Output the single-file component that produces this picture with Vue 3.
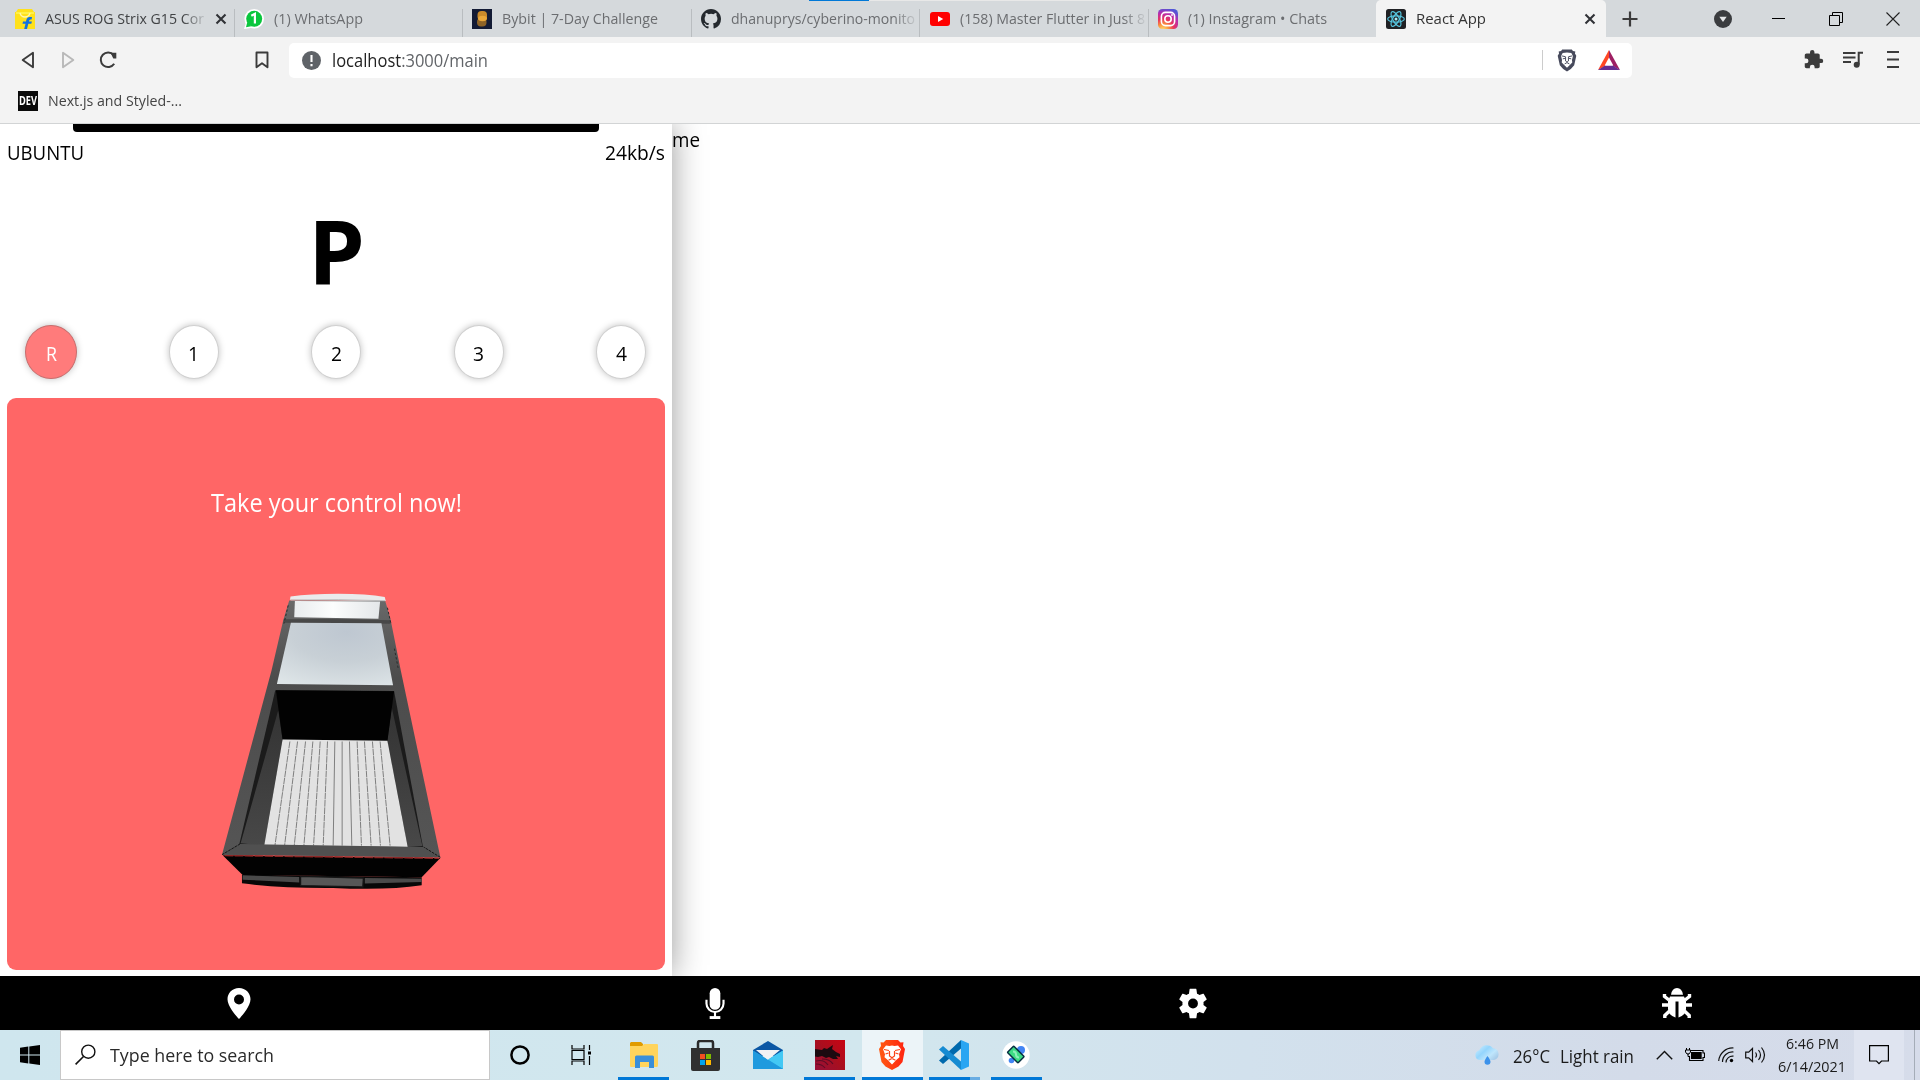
<script setup>
const tabs = [
  { id: 'flipkart', title: 'ASUS ROG Strix G15 Cor', width: 159, close: true, dark: true },
  { id: 'whatsapp', title: '(1) WhatsApp', width: 89 },
  { id: 'bybit', title: 'Bybit | 7-Day Challenge', width: 156 },
  { id: 'github', title: 'dhanuprys/cyberino-monito', width: 184, clipped: true },
  { id: 'youtube', title: '(158) Master Flutter in Just 8', width: 185, clipped: true },
  { id: 'instagram', title: '(1) Instagram • Chats', width: 139 },
  { id: 'react', title: 'React App', width: 70, close: true, active: true },
]
const gears = [
  { label: 'R', width: 11 },
  { label: '1', width: 11 },
  { label: '2', width: 11 },
  { label: '3', width: 11 },
  { label: '4', width: 11 },
]
const planks = [
  [270, 225], [293, 254], [317, 283], [339, 312], [361, 341], [383, 370], [405, 400],
  [427, 427], [449, 456], [472, 485], [494, 514], [518, 542], [541, 571],
]

// Squeezes a text run to a known advance width.
const vFit = (el, { value }) => {
  el.style.transform = ''
  el.style.width = 'max-content'
  const natural = el.getBoundingClientRect().width
  el.style.width = `${value}px`
  el.style.transform = `scaleX(${value / natural})`
}
</script>

<template>
  <div class="screen">
    <header class="tabstrip">
      <div class="progress"><span></span></div>
      <div
        v-for="t in tabs"
        :key="t.id"
        class="tab"
        :class="{ active: t.active, dark: t.dark }"
      >
        <svg class="fav" viewBox="0 0 20 20">
          <g v-if="t.id === 'flipkart'">
            <path d="M0 3h1l2-3h14l2 3h1v17H0z" fill="#ffe11b" />
            <path d="M1 3h18v2H1z" fill="#fff04a" />
            <path d="M5 4q1 4 5 4t5-4" fill="none" stroke="#fff7b0" stroke-width="1.3" />
            <path d="M17 8h-2.500q-2.500 0-3.200 3l-.3 1.500H8l-.5 2.200h3l-1.300 5.300h2.800l1.300-5.300h3l.6-2.200h-3q.3-2 1.600-2h1.100z" fill="#1372e0" />
          </g>
          <g v-else-if="t.id === 'whatsapp'">
            <circle cx="10.200" cy="9.800" r="9.800" fill="#fff" />
            <path d="M0 20l1.800-6 5 5z" fill="#fff" />
            <circle cx="10.200" cy="9.800" r="8" fill="#0ac63e" />
            <path d="M2 18.200l1.300-5 4 4z" fill="#0ac63e" />
            <path d="M7.300 6.800l3.600-2v9.700" fill="none" stroke="#fff" stroke-width="2.200" />
          </g>
          <g v-else-if="t.id === 'bybit'">
            <path d="M0 0h20v20H0z" fill="#131b35" />
            <rect x="5.500" y="2" width="9.500" height="9.500" rx="4" fill="#c98a2b" />
            <rect x="5" y="9" width="9.500" height="8.500" rx="4" fill="#8f6427" />
            <ellipse cx="10.500" cy="9.500" rx="4.500" ry="2.800" fill="#e8a63a" />
          </g>
          <path
            v-else-if="t.id === 'github'"
            transform="scale(1.25)"
            fill="#24292e"
            d="M8 0C3.580 0 0 3.580 0 8c0 3.540 2.290 6.530 5.470 7.590.4.070.55-.17.55-.38v-1.490c-2.010.37-2.530-.49-2.690-.94-.09-.23-.48-.94-.82-1.130-.28-.15-.68-.52-.01-.53.63-.01 1.080.58 1.230.82.72 1.210 1.870.87 2.330.66.070-.52.28-.87.51-1.070-1.780-.2-3.640-.89-3.640-3.950 0-.87.31-1.590.82-2.150-.08-.2-.36-1.020.08-2.120 0 0 .67-.21 2.200.82a7.600 7.600 0 0 1 4 0c1.530-1.040 2.200-.82 2.200-.82.44 1.100.16 1.920.08 2.120.51.56.82 1.270.82 2.150 0 3.070-1.870 3.750-3.650 3.950.29.25.54.73.54 1.480v2.200c0 .21.15.46.55.38A8 8 0 0 0 16 8c0-4.420-3.580-8-8-8z"
          />
          <g v-else-if="t.id === 'youtube'">
            <rect y="3" width="20" height="14" rx="3" fill="#f00" />
            <path d="M8 7l5.200 3L8 13z" fill="#fff" />
          </g>
          <g v-else-if="t.id === 'instagram'">
            <defs>
              <radialGradient id="ig" cx=".25" cy="1.050" r="1.100">
                <stop offset="0" stop-color="#ffe07a" />
                <stop offset=".25" stop-color="#fb9a3c" />
                <stop offset=".5" stop-color="#e9345f" />
                <stop offset=".78" stop-color="#b52db0" />
                <stop offset="1" stop-color="#5157d6" />
              </radialGradient>
            </defs>
            <rect width="20" height="20" rx="4.500" fill="url(#ig)" />
            <rect x="3.400" y="3.400" width="13.200" height="13.200" rx="4" fill="none" stroke="#fff" stroke-width="1.600" />
            <circle cx="10" cy="10" r="3.200" fill="none" stroke="#fff" stroke-width="1.600" />
            <circle cx="14" cy="6" r=".9" fill="#fff" />
          </g>
          <g v-else fill="none" stroke="#56c5de" stroke-width="1.200">
            <rect width="20" height="20" rx="2.500" fill="#202124" stroke="none" />
            <ellipse cx="10" cy="10" rx="8.300" ry="3.200" />
            <ellipse cx="10" cy="10" rx="8.300" ry="3.200" transform="rotate(60 10 10)" />
            <ellipse cx="10" cy="10" rx="8.300" ry="3.200" transform="rotate(120 10 10)" />
            <circle cx="10" cy="10" r="1.500" fill="#a5ecf7" stroke="none" />
          </g>
        </svg>
        <div class="title" :class="{ fade: t.clipped || t.dark }">
          <span v-fit="t.width" class="fit">{{ t.title }}</span>
        </div>
        <svg v-if="t.close" class="close" viewBox="0 0 12 12">
          <path d="M1.500 1.500l9 9m0-9l-9 9" stroke="#303236" stroke-width="2.100" />
        </svg>
      </div>
      <svg class="plus" viewBox="0 0 16 16"><path d="M8 .5v15M.5 8h15" stroke="#3b3b3b" stroke-width="2.200" /></svg>
      <svg class="tabsearch" viewBox="0 0 18 18">
        <circle cx="9" cy="9" r="9" fill="#3a3c3f" />
        <path d="M5.300 6.700h7.400L9 12z" fill="#e4e6e8" />
      </svg>
      <div class="wincontrols">
        <svg width="14" height="14" viewBox="0 0 14 14"><path d="M0 6.500h13" stroke="#000" /></svg>
        <svg width="14" height="14" viewBox="0 0 14 14" fill="none" stroke="#000">
          <path d="M.5 3.500h10v10H.5zM3.500 3V.500h10v10H11" />
        </svg>
        <svg width="14" height="14" viewBox="0 0 14 14"><path d="M.5.500l13 13m0-13l-13 13" stroke="#222" stroke-width="1.100" /></svg>
      </div>
    </header>

    <div class="toolbar">
      <div class="navbtns">
        <svg width="14" height="18" viewBox="0 0 14 18"><path d="M12 1.800v14.400L1.700 9z" fill="none" stroke="#3b3b3b" stroke-width="1.900" stroke-linejoin="round" /></svg>
        <svg width="14" height="18" viewBox="0 0 14 18"><path d="M2 1.800v14.400L12.300 9z" fill="none" stroke="#b8b8b8" stroke-width="1.900" stroke-linejoin="round" /></svg>
        <svg class="reload" width="19" height="18" viewBox="0 0 19 18">
          <path d="M15.200 12.800A7.300 7.300 0 1 1 14.600 4" fill="none" stroke="#3b3b3b" stroke-width="2" />
          <path d="M11.500 1.800h5.800v5.800h-3z" fill="#3b3b3b" />
        </svg>
      </div>
      <svg class="mark" width="14" height="18" viewBox="0 0 14 18"><path d="M1.500 1.500h11v14.800L7 12.300l-5.500 4z" fill="none" stroke="#3b3b3b" stroke-width="1.900" stroke-linejoin="round" /></svg>
      <div class="address">
        <svg class="info" viewBox="0 0 19 19">
          <circle cx="9.500" cy="9.500" r="9.500" fill="#5f6368" />
          <path d="M9.500 4v7M9.500 13v2.300" stroke="#fff" stroke-width="2.100" />
        </svg>
        <span v-fit="156" class="fit url">localhost<i>:3000/main</i></span>
        <span class="bar"></span>
        <svg class="shield" viewBox="0 0 20 24">
          <path d="M5 .5h10l1.200 1.600 2.500.5-.4 2 1.400 2.400L17.500 17 14 20.800 10 23.500 6 20.800 2.500 17 .3 7l1.400-2.400-.4-2 2.500-.5z" fill="#474a5c" />
          <path d="M5.500 4.300l4.500-.6 4.500.6 1.700 3-1 4.200.3 2.500-2.300 2.400L10 19.600l-3.200-3.200L4.500 14l.3-2.500-1-4.200z" fill="#fff" />
          <path d="M4.500 7.200l3.800.8m7.200-.8l-3.800.8M5.600 10.300l2.700-.7m6.100.7l-2.700-.7M8.500 8v4.500L10 13.700l1.500-1.200V8M7.500 15.600l2.500-1.400 2.500 1.400" fill="none" stroke="#474a5c" stroke-width="1" />
        </svg>
        <svg class="bat" viewBox="0 0 22 20">
          <path d="M11 0L0 20l7-4 4-7z" fill="#ff4724" />
          <path d="M11 0l11 20-7-4-4-7z" fill="#9e1f63" />
          <path d="M0 20l7-4.500h8L22 20z" fill="#662d91" />
          <path d="M11 7.500l4.300 8H6.700z" fill="#fff" />
        </svg>
      </div>
      <div class="tools">
        <svg width="22" height="22" viewBox="1 1 22 22"><path fill="#3b3b3b" d="M20.500 11H19V7c0-1.100-.9-2-2-2h-4V3.500a2.500 2.500 0 0 0-5 0V5H4c-1.100 0-2 .9-2 2v3.800h1.500a2.700 2.700 0 0 1 0 5.400H2V20c0 1.100.9 2 2 2h3.800v-1.500a2.700 2.700 0 0 1 5.400 0V22H17c1.100 0 2-.9 2-2v-4h1.500a2.500 2.500 0 0 0 0-5z" transform="translate(2 1) scale(.88)" /></svg>
        <svg width="20" height="18" viewBox="0 0 20 18">
          <path d="M0 2h12.500M0 6.500h12.500M0 11h8" stroke="#3b3b3b" stroke-width="1.900" />
          <path d="M15.700 13.500V1.800H20" fill="none" stroke="#3b3b3b" stroke-width="2" />
          <circle cx="13.700" cy="13.800" r="3" fill="#3b3b3b" />
        </svg>
        <svg width="12" height="18" viewBox="0 0 12 18"><path d="M0 1h12M0 8.500h12M0 16h12" stroke="#3b3b3b" stroke-width="1.900" /></svg>
      </div>
    </div>

    <div class="bookmarks">
      <span class="dev"><b v-fit="18" class="fit">DEV</b></span>
      <span v-fit="134" class="fit link">Next.js and Styled-...</span>
    </div>

    <main class="page">
      <section class="phone">
        <div class="notch"></div>
        <div class="status">
          <span v-fit="77" class="fit">UBUNTU</span>
          <span v-fit="60" class="fit">24kb/s</span>
        </div>
        <div class="mode"><span v-fit="57" class="fit">P</span></div>
        <div class="gears">
          <div v-for="(g, i) in gears" :key="g.label" class="gear" :class="{ on: i === 0 }">
            <span v-fit="g.width" class="fit">{{ g.label }}</span>
          </div>
        </div>
        <div class="card">
          <span v-fit="251" class="fit">Take your control now!</span>
          <svg class="truck" viewBox="60 365 670 895">
            <defs>
              <linearGradient id="body" x1="0" y1="0" x2="0" y2="1"><stop offset="0" stop-color="#696969" /><stop offset=".3" stop-color="#4c4c4c" /><stop offset="1" stop-color="#555" /></linearGradient>
              <linearGradient id="hood" x1="0" y1="0" x2="1" y2="0"><stop offset="0" stop-color="#e9ecee" /><stop offset=".45" stop-color="#fcfdfd" /><stop offset="1" stop-color="#e4e7e9" /></linearGradient>
              <radialGradient id="glass" cx=".6" cy=".15" r=".95"><stop offset="0" stop-color="#bec7d1" /><stop offset=".5" stop-color="#c8d0d6" /><stop offset="1" stop-color="#dde4e7" /></radialGradient>
              <linearGradient id="wall" x1="0" y1="0" x2="0" y2="1"><stop offset="0" stop-color="#333" /><stop offset="1" stop-color="#484848" /></linearGradient>
            </defs>
            <path d="M268 390L556 390 572 445 603 600 722 1162 66 1154 215 600 250 450z" fill="url(#body)" />
            <path d="M270 388L272 378Q330 370 415 370T555 380L558 392z" fill="#eaebec" />
            <path d="M272 389Q420 386 556 391" fill="none" stroke="#bbb" stroke-width="3" />
            <path d="M285 392L541 393 536 445 283 441z" fill="url(#hood)" />
            <path d="M252 447Q400 444 572 450V460L250 457z" fill="#484848" />
            <path d="M273 457L545 459 580 645 231 641z" fill="url(#glass)" />
            <path d="M563 412L574 462M584 535L596 598M265 405L252 460" stroke="#2c2c2c" stroke-width="3" stroke-dasharray="7 6" fill="none" />
            <path d="M226 660L583 662 670 1132 118 1123z" fill="#1b1b1b" />
            <path d="M235 720L248 808 193 1126 122 1120zM576 712L563 812 624 1131 668 1128z" fill="url(#wall)" />
            <path d="M228 660L583 663 563 812 248 808z" fill="#020202" />
            <path d="M248 808L563 812 624 1131 193 1126z" fill="#e2e2e2" />
            <path
              v-for="([top, bottom], i) in planks"
              :key="i"
              :d="`M${top} 814L${bottom} 1127`"
              stroke="#7e7e7e"
              stroke-width="3"
              :stroke-dasharray="i > 5 && i < 9 ? 'none' : '20 2'"
            />
            <path d="M118 1122L672 1131 722 1162 66 1154z" fill="#505050" />
            <path d="M66 1154l54-32M722 1162l-50-31" stroke="#161616" stroke-width="3" stroke-dasharray="8 3" />
            <path d="M68 1156L722 1164 666 1222 128 1215z" fill="#020202" />
            <path d="M74 1157L718 1165" stroke="#8f2524" stroke-width="4" stroke-dasharray="26 4" />
            <path d="M126 1214L666 1222V1246Q560 1262 400 1254 240 1255 126 1240z" fill="#080808" />
            <path d="M128 1216L298 1221V1238L128 1229zM495 1224L666 1226V1236L495 1241z" fill="#4a4a4a" />
            <path d="M302 1219L491 1224 489 1251 302 1247z" fill="#575757" stroke="#161616" stroke-width="4" />
          </svg>
        </div>
      </section>
      <section class="content"><span v-fit="28" class="fit">me</span></section>
    </main>

    <nav class="dock">
      <svg width="24" height="31" viewBox="0 0 24 31"><path fill="#fff" fill-rule="evenodd" d="M12 0C5.300 0 .5 5 .5 11.300.5 19.500 12 31 12 31s11.500-11.500 11.500-19.700C23.500 5 18.700 0 12 0zm0 6.500a5 5 0 1 1 0 10 5 5 0 0 1 0-10z" /></svg>
      <svg width="20" height="31" viewBox="0 0 20 32">
        <rect x="4.500" y="0" width="11" height="22.500" rx="5.500" fill="#fff" />
        <path d="M1.200 12v4a8.800 8.800 0 0 0 17.600 0v-4M10 25v5" fill="none" stroke="#fff" stroke-width="2.200" />
        <path d="M4.500 29h11v3h-11z" fill="#fff" />
      </svg>
      <svg width="30" height="31" viewBox="1.500 1 21 22"><path fill="#fff" d="M19.430 12.980c.04-.32.070-.64.070-.98s-.03-.66-.07-.98l2.110-1.650c.19-.15.24-.42.12-.64l-2-3.460c-.12-.22-.39-.3-.61-.22l-2.490 1c-.52-.4-1.080-.73-1.690-.98l-.38-2.650C14.460 1.700 14.250 1.500 14 1.500h-4c-.25 0-.46.2-.49.920l-.38 2.650c-.61.25-1.170.59-1.690.98l-2.490-1c-.23-.09-.49 0-.61.22l-2 3.460c-.13.22-.07.49.12.640l2.110 1.650c-.04.32-.07.65-.07.98s.03.66.070.98l-2.110 1.650c-.19.15-.24.42-.12.640l2 3.460c.12.22.39.300.61.220l2.490-1c.52.400 1.080.730 1.690.980l.38 2.650c.03.720.24.920.49.920h4c.25 0 .46-.2.490-.92l.38-2.650c.61-.25 1.170-.59 1.690-.98l2.490 1c.23.090.49 0 .61-.22l2-3.460c.12-.22.070-.49-.12-.64l-2.110-1.650zM12 15.500a3.500 3.500 0 1 1 0-7 3.500 3.500 0 0 1 0 7z" /></svg>
      <svg width="30" height="31" viewBox="0 0 30 31">
        <path d="M9 6.800Q10 0 15 0t6 6.800z" fill="#fff" />
        <path d="M2.500 6v2.500L7 12M27.500 6v2.500L23 12M0 17h7m23 0h-7M2.800 30v-2.500L7.500 23m19.700 7v-2.500L22.500 23" fill="none" stroke="#fff" stroke-width="3.400" />
        <path d="M8 8.500h14l2 4.500v8q0 6-7.500 8.500V13.500h-3v16Q6 27 6 21v-8z" fill="#fff" />
      </svg>
    </nav>

    <footer class="taskbar">
      <div class="start">
        <svg width="20" height="20" viewBox="0 0 20 20"><path d="M0 2.800l8.300-1.200v7.900H0zM9.300 1.400L20 0v9.500H9.300zM0 10.500h8.300v7.900L0 17.200zM9.300 10.500H20V20L9.300 18.600z" /></svg>
      </div>
      <div class="search">
        <svg width="21" height="21" viewBox="0 0 21 21"><circle cx="13.300" cy="7.700" r="6.600" fill="none" stroke="#111" stroke-width="1.400" /><path d="M8.500 12.500L.6 20.400" stroke="#111" stroke-width="1.600" /></svg>
        <span v-fit="164" class="fit">Type here to search</span>
      </div>
      <div class="apps">
        <div class="app">
          <svg width="20" height="20" viewBox="0 0 20 20"><circle cx="10" cy="10" r="8.600" fill="none" stroke="#000" stroke-width="2.500" /></svg>
        </div>
        <div class="app">
          <svg width="22" height="20" viewBox="0 0 22 20" fill="none" stroke="#000" stroke-width="1.200">
            <path d="M1 0v4h12V0M1 5.500h12v9H1zM1 20v-4h12v4M18.500 0v5M18.500 11v9" />
            <path d="M17 6.500h3v3h-3z" fill="#000" stroke="none" />
          </svg>
        </div>
        <div class="app running">
          <svg width="28" height="26" viewBox="0 0 28 26">
            <path d="M1 0h10l2 2v3H0V1z" fill="#e09b00" />
            <path d="M0 4h12l2-2h13q1 0 1 1v20q0 2-1 2H1q-1 0-1-1z" fill="#ffd45c" />
            <path d="M5 26V15q0-1.500 1.500-1.500h16q1.500 0 1.500 1.500v11h-5v-6h-9v6z" fill="#3a8fd9" />
          </svg>
        </div>
        <div class="app">
          <svg width="29" height="31" viewBox="0 0 29 31">
            <path d="M7 9V3q0-2 2-2h11q2 0 2 2v6" fill="none" stroke="#2b2b2b" stroke-width="2.500" />
            <path d="M0 8h29v21q0 2-2 2H2q-2 0-2-2z" fill="#303030" />
            <path d="M9 14h5v5H9z" fill="#f25022" /><path d="M15 14h5v5h-5z" fill="#7fba00" />
            <path d="M9 20h5v5H9z" fill="#00a4ef" /><path d="M15 20h5v5h-5z" fill="#ffb900" />
          </svg>
        </div>
        <div class="app">
          <svg width="30" height="28" viewBox="0 0 30 28">
            <path d="M0 9L15 0l15 9v6H0z" fill="#0b57a4" />
            <path d="M0 9.500L15 18.500 30 9.500V28H0z" fill="#26a3e0" />
            <path d="M3 9h24L15 19z" fill="#f2f2f4" />
            <path d="M30 9.500V28L15 18.500z" fill="#43c8f4" />
            <path d="M0 28V10L30 28z" fill="#1f9ade" />
          </svg>
        </div>
        <div class="app running">
          <svg width="30" height="30" viewBox="0 0 30 30">
            <defs><linearGradient id="red" x1="0" y1="1" x2="1" y2="0"><stop offset="0" stop-color="#95103a" /><stop offset=".5" stop-color="#a80f1f" /><stop offset="1" stop-color="#c90412" /></linearGradient></defs>
            <path d="M0 0h30v30H0z" fill="url(#red)" />
            <path d="M0 9l7 1 2-2 3 1 3-2 3-2-1 4 4 3 4 2v3l-4-1 2 3-5 0-4-2-3 1-4-2-4 1-5-1z" fill="#1c0a10" />
            <path d="M1 21q8-2 12 4m-12-1q6 0 9 4M7 19q8 0 11 5" fill="none" stroke="#5d0c26" stroke-width="1.200" />
          </svg>
        </div>
        <div class="app running current">
          <svg width="26" height="30" viewBox="0 0 26 30">
            <defs><linearGradient id="lion"><stop offset="0" stop-color="#ff5a13" /><stop offset="1" stop-color="#ff2410" /></linearGradient></defs>
            <path d="M7 0h12l2.500 2.500 3-.2L24 6l2 3-2.500 13-4 4.500L13 30l-6.500-3.500-4-4.500L0 9l2-3-.5-3.700 3 .2z" fill="url(#lion)" />
            <path d="M7 5.500l3.500.5 2.500-.4 2.500.4 3.500-.5 3 3.800-2 5 .5 3-3 2.500L13 24.500l-4.500-4.700-3-2.500.5-3-2-5z" fill="#fff" />
            <path d="M5 9.500l5 1M21 9.500l-5 1M6.500 14l3-1m10 1l-3-1M10.500 11v5l2.500 1.800 2.500-1.800v-5M9.500 20.300L13 18.500l3.500 1.800" fill="none" stroke="#fb4316" stroke-width="1.200" />
          </svg>
        </div>
        <div class="app running grouped">
          <svg width="30" height="30" viewBox="0 0 30 30">
            <path d="M22 0v8.500L4 24 0 20.500z" fill="#0069ad" />
            <path d="M22 30v-8.500L4 6 0 9.500z" fill="#168bd2" />
            <path d="M22 0l8 3.500v23L22 30z" fill="#2aa5f2" />
          </svg>
        </div>
        <div class="app running">
          <svg width="28" height="28" viewBox="0 0 28 28">
            <circle cx="14" cy="14" r="13.700" fill="#fff" />
            <circle cx="19" cy="9" r="4" fill="#4285f4" /><circle cx="9.500" cy="19.500" r="2.800" fill="#4285f4" />
            <rect x="9.300" y="6" width="9" height="15" rx="1" transform="rotate(-45 13.800 13.500)" fill="#3ddc84" stroke="#073042" stroke-width="1.500" />
            <path d="M11 10.500q3 0 3 3t3 3" fill="none" stroke="#8cf0ba" stroke-width="2" />
          </svg>
        </div>
      </div>
      <div class="tray">
        <svg class="weather" width="26" height="20" viewBox="0 0 26 20">
          <defs><linearGradient id="cloud" x1="0" y1="0" x2="1" y2=".7"><stop offset="0" stop-color="#d8f2ff" /><stop offset=".45" stop-color="#93d5fd" /><stop offset=".75" stop-color="#bfe6fc" /><stop offset="1" stop-color="#a9cdea" /></linearGradient></defs>
          <path d="M5.500 15a5 5 0 0 1-.2-9.800A8 8 0 0 1 19 3.200 6 6 0 0 1 20 15z" fill="url(#cloud)" />
          <path d="M13.500 11q-3 4-3 5.800a3 3 0 0 0 6 0q0-1.800-3-5.800z" fill="#3d92ea" />
        </svg>
        <span v-fit="37" class="fit temp">26°C</span>
        <span v-fit="74" class="fit rain">Light rain</span>
        <svg class="up" width="17" height="10" viewBox="0 0 17 10"><path d="M.8 9.200l7.700-7.700 7.700 7.700" fill="none" stroke="#111" stroke-width="1.400" /></svg>
        <svg class="battery" width="20" height="14" viewBox="0 0 20 14">
          <path d="M6 2.500H18v2.500h1.500v4.500H18v3H4.500V8" fill="none" stroke="#000" stroke-width="1.100" />
          <path d="M6 4h10.700v7H6z" />
          <path d="M1.500 0v2m3-2v2M3 5.500v3h1.500M.5 2h5v2l-1.500 2H2L.5 4z" fill="none" stroke="#000" />
        </svg>
        <svg class="wifi" width="16" height="16" viewBox="0 0 16 16">
          <path d="M.7 14A14 14 0 0 1 15.500 1M4.500 15A10 10 0 0 1 15.500 5M8 15.500a6.500 6.500 0 0 1 7.500-6.300" fill="none" stroke="#111" stroke-width="1.200" />
          <circle cx="13.500" cy="13.500" r="1.700" />
        </svg>
        <svg class="sound" width="21" height="18" viewBox="0 0 21 18" fill="none" stroke="#111" stroke-width="1.200">
          <path d="M.7 6.200h3L7.500 2.500v13L3.700 11.800h-3zM10.500 6.500q2 2.500 0 5M13.500 4q4 5 0 10M16.500 1.500q6 7.500 0 15" />
        </svg>
        <div class="clock">
          <span v-fit="53" class="fit">6:46 PM</span>
          <span v-fit="68" class="fit">6/14/2021</span>
        </div>
        <div class="notify">
          <svg width="20" height="20" viewBox="0 0 20 20"><path d="M.6.700h18.800v15.300h-6.900L10 18.700 7.500 16H.6z" fill="none" stroke="#000" stroke-width="1.200" /></svg>
        </div>
        <span class="desktop"></span>
      </div>
    </footer>
  </div>
</template>

<style>
body {
  margin: 0;
  overflow: hidden;
}
</style>

<style scoped>
.screen {
  display: flex;
  flex-direction: column;
  width: 1920px;
  height: 1080px;
  overflow: hidden;
  background: #fff;
  font-family: 'Open Sans', 'Noto Sans', sans-serif;
  color: #000;
}
.screen * {
  box-sizing: border-box;
}
svg {
  display: block;
  flex: none;
}
.fit {
  display: inline-block;
  flex: none;
  white-space: nowrap;
  transform-origin: 0 50%;
}

.tabstrip {
  position: relative;
  display: flex;
  align-items: center;
  height: 37px;
  flex: none;
  padding-left: 6px;
  background: #d5d9dc;
  font-size: 15px;
}
.progress {
  position: absolute;
  top: 0;
  left: 809px;
  width: 301px;
  height: 1px;
  background: #e8e8e8;
}
.progress span {
  display: block;
  width: 60px;
  height: 1px;
  background: #0078d7;
}
.tab {
  display: flex;
  align-items: center;
  gap: 10px;
  width: 228.600px;
  height: 37px;
  flex: none;
  padding: 1px 4px 0 9.300px;
  color: #6b6d70;
  background: linear-gradient(#b9bdc0, #b9bdc0) no-repeat right 0 top 9px / 1px 28px;
}
.tab:nth-child(7) {
  background: none;
}
.tab.dark {
  padding-right: 8px;
  color: #414345;
}
.tab.active {
  width: 230px;
  margin-left: -2px;
  padding-right: 10px;
  padding-left: 10px;
  color: #333;
  background: #f3f3f3;
  border-radius: 5px 5px 0 0;
}
.fav {
  width: 20px;
  height: 20px;
}
.title {
  flex: 1;
  padding-bottom: 2px;
  line-height: 22px;
  overflow: hidden;
}
.title.fade {
  mask-image: linear-gradient(90deg, #000 calc(100% - 22px), rgba(0, 0, 0, 0.12) 100%);
}
.close {
  width: 12px;
  height: 12px;
}
.plus {
  width: 16px;
  height: 16px;
  margin-left: 16px;
}
.tabsearch {
  width: 18px;
  height: 18px;
  margin-left: 76px;
}
.wincontrols {
  display: flex;
  gap: 43px;
  margin-left: 40px;
}

.toolbar {
  display: flex;
  align-items: center;
  height: 46px;
  flex: none;
  background: #f3f3f3;
}
.navbtns {
  display: flex;
  gap: 26px;
  margin-left: 21px;
}
.reload {
  margin-left: -2px;
}
.mark {
  margin-left: 137px;
}
.address {
  display: flex;
  align-items: center;
  width: 1343px;
  height: 35px;
  margin-left: 20px;
  padding-left: 13px;
  border-radius: 5px;
  background: #fff;
  font-size: 17.500px;
  color: #222;
}
.info {
  width: 19px;
  height: 19px;
  margin-right: 11px;
}
.url {
  padding-bottom: 1px;
}
.url i {
  font-style: normal;
  color: #626569;
}
.bar {
  width: 1px;
  height: 20px;
  margin-left: 1054px;
  background: #ccc;
}
.shield {
  width: 20px;
  height: 23px;
  margin-left: 14px;
}
.bat {
  width: 22px;
  height: 20px;
  margin-left: 21px;
}
.tools {
  display: flex;
  align-items: center;
  gap: 19px;
  margin-left: 170px;
}
.tools svg:last-child {
  margin-left: 5px;
}

.bookmarks {
  display: flex;
  align-items: center;
  gap: 10px;
  height: 41px;
  flex: none;
  padding: 0 0 5px 18px;
  border-bottom: 1px solid #d2d4d5;
  background: #f3f3f3;
  font-size: 15px;
  color: #444;
}
.link {
  padding-bottom: 2px;
}
.dev {
  display: flex;
  align-items: center;
  justify-content: center;
  width: 20px;
  height: 20px;
  background: #0a0a0a;
  color: #fff;
  font-size: 12px;
}

.page {
  display: flex;
  height: 852px;
  flex: none;
  overflow: hidden;
  font-size: 20px;
  line-height: 28px;
}
.phone {
  display: flex;
  flex-direction: column;
  width: 672px;
  flex: none;
  padding: 0 7px;
  background: #fff;
  box-shadow: 0 0 31px rgba(0, 0, 0, 0.4);
}
.notch {
  width: 526px;
  height: 8px;
  margin-left: 66px;
  border-radius: 0 0 4px 4px;
  background: #000;
}
.status {
  display: flex;
  justify-content: space-between;
  padding-top: 7px;
  height: 43px;
}
.mode {
  display: flex;
  justify-content: center;
  height: 136px;
  padding-top: 17px;
  font-size: 87px;
  font-weight: 700;
  line-height: 116px;
}
.gears {
  display: flex;
  justify-content: space-between;
  align-items: center;
  height: 82px;
  padding: 0 18px;
}
.gear {
  display: flex;
  align-items: center;
  justify-content: center;
  width: 50px;
  height: 54px;
  margin: 0 1px;
  padding-top: 3px;
  border: 1px solid #cfcfcf;
  border-radius: 50%;
  background: #fff;
  box-shadow: 0 0 7px rgba(0, 0, 0, 0.25);
}
.gear.on {
  width: 52px;
  margin: 0;
  border-color: #c86e6e;
  background: #ff7b7b;
  color: #fff;
}
.card {
  display: flex;
  flex-direction: column;
  align-items: center;
  height: 572px;
  margin-top: 5px;
  padding-top: 90px;
  border-radius: 9px;
  background: #ff6666;
  color: #fff;
  font-size: 25px;
}
.truck {
  width: 223px;
  height: 298px;
  margin: 76px 10px 0 0;
}
.content {
  padding-top: 2px;
}

.dock {
  display: flex;
  align-items: center;
  justify-content: space-around;
  height: 54px;
  flex: none;
  padding-right: 1px;
  background: #000;
}

.taskbar {
  display: flex;
  height: 50px;
  flex: none;
  background: linear-gradient(90deg, #cfe6ee, #d2e7ee 45%, #d2e1ed 65%, #d3dbe9 85%, #d6dcea);
  font-size: 18.500px;
}
.start {
  display: flex;
  align-items: center;
  justify-content: center;
  width: 60px;
}
.search {
  display: flex;
  align-items: center;
  gap: 14px;
  width: 430px;
  padding: 0 0 1px 14px;
  border: 1px solid #c8c8c8;
  background: #fff;
  color: #2a2a2a;
}
.apps {
  display: flex;
  gap: 11.100px;
  margin-left: 4px;
}
.app {
  position: relative;
  display: flex;
  align-items: center;
  justify-content: center;
  width: 51px;
}
.app.running::after {
  content: '';
  position: absolute;
  left: 0;
  right: 0;
  bottom: 0;
  height: 3px;
  background: #0078d7;
}
.app.current {
  width: 61px;
  margin: 0 -5px;
  background: #ecf4f8;
}
.app.grouped::after {
  background: linear-gradient(90deg, #0078d7 41px, #69ade3 41px);
}
.tray {
  display: flex;
  align-items: center;
  margin-left: auto;
  color: #1b1b1b;
}
.temp {
  margin-left: 13px;
}
.rain {
  margin-left: 10px;
}
.up {
  margin-left: 22px;
}
.battery {
  margin-left: 12px;
}
.wifi {
  margin-left: 13px;
}
.sound {
  margin-left: 11px;
}
.clock {
  display: flex;
  flex-direction: column;
  align-items: center;
  width: 68px;
  margin-left: 12px;
  font-size: 15px;
  line-height: 23px;
}
.notify {
  display: flex;
  align-items: center;
  justify-content: center;
  align-self: stretch;
  width: 50px;
  margin-left: 8px;
  background: #dfe4f0;
}
.desktop {
  align-self: stretch;
  width: 6px;
  margin-left: 10px;
  border-left: 1px solid #a5adb8;
}
</style>
